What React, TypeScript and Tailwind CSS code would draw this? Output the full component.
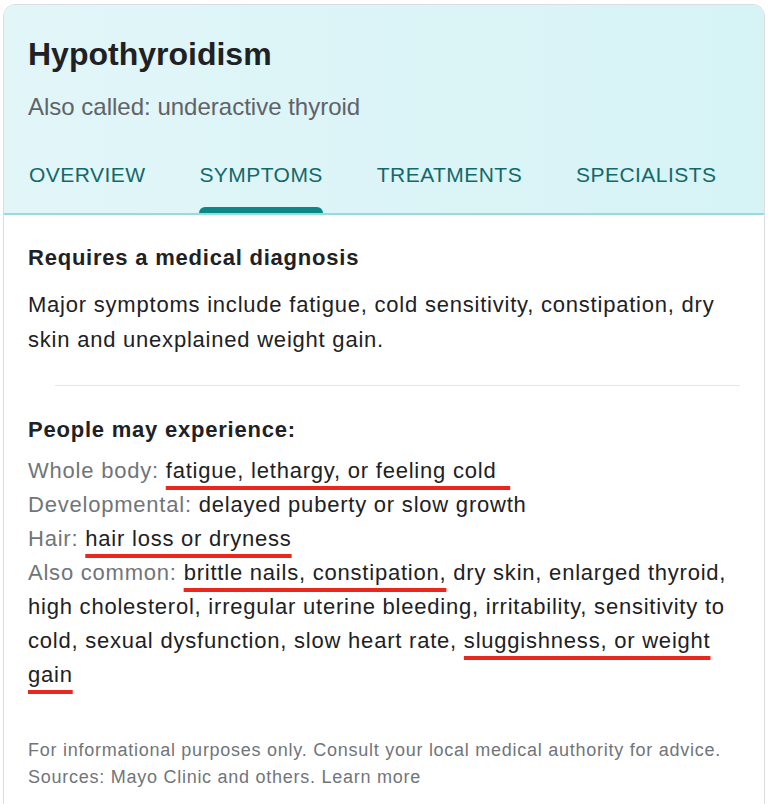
const tabs = ['OVERVIEW', 'SYMPTOMS', 'TREATMENTS', 'SPECIALISTS'];

function Mark({ children }: { children: React.ReactNode }) {
  return (
    <span className="underline decoration-[#e8281c] decoration-[3.5px] underline-offset-[8px] [text-decoration-skip-ink:none]">
      {children}
    </span>
  );
}

function Label({ children }: { children: React.ReactNode }) {
  return <span className="text-[#70757a]">{children}</span>;
}

export default function App() {
  return (
    <div className="min-h-screen bg-white pt-[4px] pl-[3px] font-['Liberation_Sans',Arial,sans-serif] overflow-hidden">
      <div className="w-[762px] h-[820px] rounded-t-[12px] border border-[#dadce0] overflow-hidden">
        <div className="bg-gradient-to-r from-[#e2f6f8] to-[#d6f3f6] px-[24px] pt-[29px] border-b-2 border-[#97dbdb]">
          <h1 className="text-[32px] leading-[40px] font-bold text-[#202124]">Hypothyroidism</h1>
          <p className="mt-[17px] text-[24px] leading-[32px] text-[#5f6368]">Also called: underactive thyroid</p>
          <div className="mt-[38px] ml-[1px] flex gap-[54px]">
            {tabs.map((t) => (
              <div key={t} className="flex flex-col">
                <span className="text-[21px] leading-[28px] tracking-[0.45px] text-[#11696b]">{t}</span>
                <div
                  className={
                    t === 'SYMPTOMS'
                      ? 'mt-[18px] h-[6px] rounded-t-[6px] bg-[#0b8787]'
                      : 'mt-[18px] h-[6px]'
                  }
                />
              </div>
            ))}
          </div>
        </div>

        <div className="px-[24px] pt-[29px] text-[#202124] tracking-[0.78px]">
          <h2 className="text-[22px] leading-[28px] font-bold">Requires a medical diagnosis</h2>
          <p className="mt-[15px] text-[22px] leading-[35px]">
            Major symptoms include fatigue, cold sensitivity, constipation, dry skin and unexplained weight gain.
          </p>
          <div className="mt-[28px] ml-[27px] h-px bg-[#e6e6e6]" />
          <h2 className="mt-[30px] text-[22px] leading-[28px] font-bold">People may experience:</h2>
          <div className="mt-[10px] text-[22px] leading-[34px]">
            <div>
              <Label>Whole body:</Label> <Mark>fatigue, lethargy, or feeling cold&nbsp;&nbsp;</Mark>
            </div>
            <div>
              <Label>Developmental:</Label> delayed puberty or slow growth
            </div>
            <div>
              <Label>Hair:</Label> <Mark>hair loss or dryness</Mark>
            </div>
            <div>
              <Label>Also common:</Label> <Mark>brittle nails, constipation,</Mark> dry skin, enlarged thyroid,
              high cholesterol, irregular uterine bleeding, irritability, sensitivity to cold, sexual dysfunction,
              slow heart rate, <Mark>sluggishness, or weight gain</Mark>
            </div>
          </div>
          <p className="mt-[45px] text-[18px] leading-[27px] tracking-[0.74px] text-[#70757a]">
            For informational purposes only. Consult your local medical authority for advice.
            <br />
            Sources: Mayo Clinic and others. Learn more
          </p>
        </div>
      </div>
    </div>
  );
}
